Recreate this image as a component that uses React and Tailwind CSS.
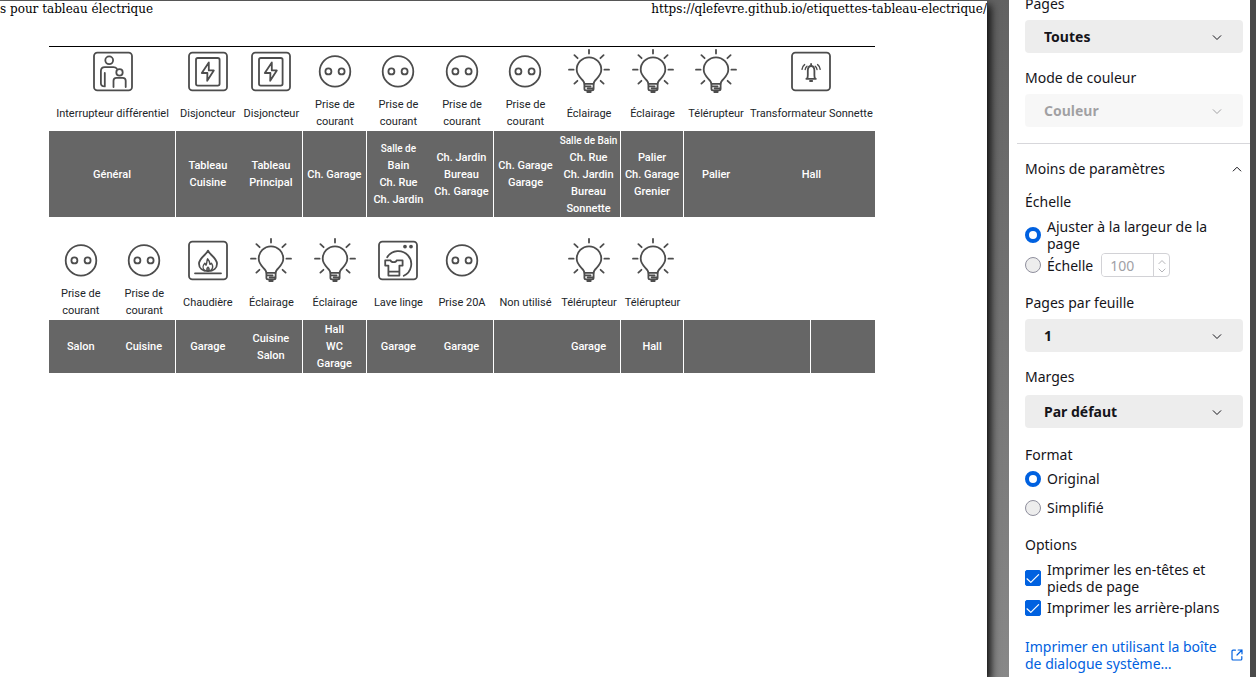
import React from "react";

const STROKE = {
  fill: "none",
  stroke: "#4d4d4d",
  strokeWidth: 1.8,
  strokeLinecap: "round",
  strokeLinejoin: "round",
};

function Glyph({ children }) {
  return (
    <svg viewBox="0 0 48 48" className="mx-auto block h-12 w-12" aria-hidden="true" {...STROKE}>
      {children}
    </svg>
  );
}

function Frame() {
  return <rect x="5" y="5.6" width="38" height="37.8" rx="3.4" />;
}

const ICONS = {
  people: (
    <Glyph>
      <Frame />
      <circle cx="20.2" cy="13.3" r="3.9" />
      <path d="M15.8 26v13.4c-2.4-.2-3.9-1.2-3.9-3V24c0-2.3 1.6-3.9 3.9-3.9h8.6c1.5 0 2.6.5 3.3 1.4" />
      <circle cx="30.5" cy="25.4" r="3.2" />
      <path d="M24.5 40v-6.2c0-1.8 1.2-3 3-3h6.2c1.8 0 3 1.2 3 3V40" />
    </Glyph>
  ),
  breaker: (
    <Glyph>
      <Frame />
      <rect x="12" y="11" width="23.6" height="27.6" rx="1.8" />
      <path d="M24.8 15.4 17.8 26h5.6l-.2 7.8 6.6-10.4h-5z" />
    </Glyph>
  ),
  socket: (
    <Glyph>
      <circle cx="24" cy="24.4" r="15.3" />
      <circle cx="17.4" cy="24.4" r="3" />
      <circle cx="30.6" cy="24.4" r="3" />
    </Glyph>
  ),
  bulb: (
    <Glyph>
      <path d="M24 2.8v3.8M9.4 8.2l3.2 3M38.6 8.2l-3.2 3M4 22.7h4.6M44 22.7h-4.6M9.4 36.6l3-2.8M38.6 36.6l-3-2.8" />
      <path d="M19.4 36.8c0-4.6-7.7-6.2-7.7-14.2a12.3 12.3 0 0 1 24.6 0c0 8-7.7 9.6-7.7 14.2" />
      <path d="M19.4 36.8h9.2v5c0 1-.6 1.600-1.600 1.600h-6c-1 0-1.600-.6-1.600-1.600zM20 39.300h5.600M22.600 41.300h5.600M22.300 45h3.400" />
    </Glyph>
  ),
  bell: (
    <Glyph>
      <Frame />
      <path d="M19.300 31.800h9.600M20 31.600c.8-1 .8-1.800.8-3.400v-4.400c0-2.600 1.300-4.800 3.300-4.800s3.300 2.200 3.300 4.800v4.400c0 1.600 0 2.400.8 3.400M24.100 17v1.600M23 34h2.200" />
      <path strokeWidth="1.400" d="M17.600 17.600c-1.600 1.200-2.400 2.800-2.600 4.800M20 19.200c-1 .8-1.600 1.900-1.800 3.300M30.600 17.600c1.600 1.200 2.400 2.800 2.600 4.800M28.200 19.200c1 .8 1.600 1.900 1.800 3.300" />
    </Glyph>
  ),
  flame: (
    <Glyph>
      <Frame />
      <path d="M11 37.300h26" />
      <path d="M24 14.600c1 3.800 9 7.200 9 13.200 0 4.200-3.400 7.200-9 7.200s-9-3-9-7.200c0-6 8-9.400 9-13.200z" />
      <path strokeWidth="1.400" d="M20.600 34.600c-2.200-2.200-1.800-5.400.2-7.400l1.200 2c1.200-2.200.6-4.400 1.600-6.400 1.400 1.200 2 3.400 2.400 5.600l1.400-1.200c1.800 2.600 1.600 5.400-.6 7.400M24 31.200c-1.400 1.200-1.400 2.400-.4 3.600M24 31.200c1.400 1.200 1.400 2.400.4 3.600" />
    </Glyph>
  ),
  washer: (
    <Glyph>
      <Frame />
      <circle cx="31" cy="10.600" r="1" fill="#4d4d4d" />
      <circle cx="37" cy="10.600" r="1" fill="#4d4d4d" />
      <path d="M13.200 21.200a13 13 0 1 1 16.600 18.600" />
      <path d="M11.200 24.400h5.400c.6 2.200 5.400 2.200 6 0h6v5.200h-3.200v10H14.400v-10h-3.200zM14.400 35.700h11" />
    </Glyph>
  ),
};

const ROWS = [
  {
    height: "h-[86px]",
    modules: [
      { icon: "people", label: ["Interrupteur différentiel"], span: 2, text: ["Général"], edge: true },
      { icon: "breaker", label: ["Disjoncteur"], text: ["Tableau", "Cuisine"] },
      { icon: "breaker", label: ["Disjoncteur"], text: ["Tableau", "Principal"], edge: true },
      { icon: "socket", label: ["Prise de", "courant"], text: ["Ch. Garage"], edge: true },
      { icon: "socket", label: ["Prise de", "courant"], small: true, text: ["Salle de", "Bain", "Ch. Rue", "Ch. Jardin"] },
      { icon: "socket", label: ["Prise de", "courant"], text: ["Ch. Jardin", "Bureau", "Ch. Garage"], edge: true },
      { icon: "socket", label: ["Prise de", "courant"], text: ["Ch. Garage", "Garage"] },
      { icon: "bulb", label: ["Éclairage"], small: true, text: ["Salle de Bain", "Ch. Rue", "Ch. Jardin", "Bureau", "Sonnette"], edge: true },
      { icon: "bulb", label: ["Éclairage"], text: ["Palier", "Ch. Garage", "Grenier"], edge: true },
      { icon: "bulb", label: ["Télérupteur"], text: ["Palier"] },
      { icon: "bell", label: ["Transformateur Sonnette"], span: 2, text: ["Hall"] },
    ],
  },
  {
    height: "h-[53px]",
    modules: [
      { icon: "socket", label: ["Prise de", "courant"], text: ["Salon"] },
      { icon: "socket", label: ["Prise de", "courant"], text: ["Cuisine"], edge: true },
      { icon: "flame", label: ["Chaudière"], text: ["Garage"] },
      { icon: "bulb", label: ["Éclairage"], text: ["Cuisine", "Salon"], edge: true },
      { icon: "bulb", label: ["Éclairage"], text: ["Hall", "WC", "Garage"], edge: true },
      { icon: "washer", label: ["Lave linge"], text: ["Garage"] },
      { icon: "socket", label: ["Prise 20A"], text: ["Garage"], edge: true },
      { label: ["Non utilisé"], text: [] },
      { icon: "bulb", label: ["Télérupteur"], text: ["Garage"], edge: true },
      { icon: "bulb", label: ["Télérupteur"], text: ["Hall"], edge: true },
      { label: [], span: 2, text: [], edge: true },
      { label: [], text: [] },
    ],
  },
];

function LabelStrip({ row }) {
  return (
    <table className="w-full table-fixed border-separate border-spacing-0 text-center font-['Roboto',sans-serif] leading-[17px]">
      <colgroup>
        {Array.from({ length: 13 }, (_, i) => (
          <col key={i} />
        ))}
      </colgroup>
      <thead>
        <tr>
          {row.modules.map((m, i) => (
            <th key={i} colSpan={m.span || 1} className="p-0 align-top text-[11px] font-normal text-[#212529]">
              {m.icon ? ICONS[m.icon] : <div className="h-12" />}
              <div className="flex h-9 flex-col justify-center whitespace-nowrap">
                {m.label.map((line) => (
                  <span key={line}>{line}</span>
                ))}
              </div>
            </th>
          ))}
        </tr>
      </thead>
      <tbody>
        <tr className={row.height}>
          {row.modules.map((m, i) => (
            <td
              key={i}
              colSpan={m.span || 1}
              className={`bg-[#666] p-0 align-middle text-[11px] font-medium text-white ${m.edge ? "border-r border-white" : ""}`}
            >
              <div className="flex flex-col items-center whitespace-nowrap">
                {m.text.map((line, n) => (
                  <span key={line} className={m.small && n === 0 ? "text-[10px]" : ""}>
                    {line}
                  </span>
                ))}
              </div>
            </td>
          ))}
        </tr>
      </tbody>
    </table>
  );
}

function Chevron({ up, className }) {
  return (
    <svg viewBox="0 0 10 10" className={className} fill="none" stroke="currentColor" strokeWidth="1" strokeLinecap="round" strokeLinejoin="round" aria-hidden="true">
      <path d={up ? "M1.200 7 5 3.200 8.800 7" : "M1.200 3.700 5 7.500l3.800-3.800"} />
    </svg>
  );
}

function SelectField({ id, label, options, disabled, className, gap = "mt-2" }) {
  return (
    <div className={className}>
      <label htmlFor={id} className="block">
        {label}
      </label>
      <div className={`grid items-center ${gap} ${disabled ? "opacity-40" : ""}`}>
        <select
          id={id}
          disabled={disabled}
          className="col-start-1 row-start-1 h-[33px] w-full appearance-none rounded bg-[#ededed] pr-9 pl-[19px] font-bold"
        >
          {options.map((o) => (
            <option key={o}>{o}</option>
          ))}
        </select>
        <Chevron className="pointer-events-none col-start-1 row-start-1 mr-[21px] h-2.5 w-2.5 justify-self-end" />
      </div>
    </div>
  );
}

function Radio({ id, name, label, defaultChecked, className = "" }) {
  return (
    <div className={`flex items-center gap-1.5 ${className}`}>
      <input
        type="radio"
        id={id}
        name={name}
        defaultChecked={defaultChecked}
        className="h-4 w-4 shrink-0 appearance-none rounded-full border border-[#8f8f9d] bg-[#ededed] checked:border-[4px] checked:border-[#0061e0] checked:bg-white"
      />
      <label htmlFor={id}>{label}</label>
    </div>
  );
}

function Checkbox({ id, label, className = "" }) {
  return (
    <div className={`flex items-center gap-1.5 ${className}`}>
      <span className="grid shrink-0">
        <input
          type="checkbox"
          id={id}
          defaultChecked
          className="peer col-start-1 row-start-1 h-4 w-4 appearance-none rounded-xs border border-[#8f8f9d] bg-[#ededed] checked:border-[#0061e0] checked:bg-[#0061e0]"
        />
        <svg viewBox="0 0 16 16" className="pointer-events-none invisible col-start-1 row-start-1 h-4 w-4 peer-checked:visible" fill="none" stroke="#fff" strokeWidth="1.2" strokeLinecap="round" strokeLinejoin="round" aria-hidden="true">
          <path d="M2 8.800 5.800 12.400 13.600 4.600" />
        </svg>
      </span>
      <label htmlFor={id}>{label}</label>
    </div>
  );
}

function Preview() {
  return (
    <main className="min-w-0 flex-1 overflow-hidden bg-linear-to-b from-[#626262] to-[#888] pt-px pr-[22px]">
      <article className="h-full bg-white shadow-[4px_4px_8px_#111]">
        <header className="flex justify-between font-['DejaVu_Serif',serif] text-[12px] leading-4 whitespace-nowrap text-black">
          <span>s pour tableau électrique</span>
          <span>https://qlefevre.github.io/etiquettes-tableau-electrique/</span>
        </header>
        <div className="mt-[29px] mr-28 ml-[49px] flex flex-col gap-[19px] border-t border-black">
          {ROWS.map((row, i) => (
            <LabelStrip key={i} row={row} />
          ))}
        </div>
      </article>
    </main>
  );
}

function Settings() {
  return (
    <aside className="w-[247px] shrink-0 overflow-hidden border-r-[6px] border-[#4a4a4a] bg-white font-['Noto_Sans',sans-serif] text-[14px] leading-[17px] text-[#15141a]">
      <form className="-mt-[5px] pl-4">
        <div className="pr-[7px]">
          <SelectField id="pages" label="Pages" options={["Toutes"]} />
          <SelectField id="color" label="Mode de couleur" options={["Couleur"]} disabled className="mt-4" />
        </div>
        <hr className="mt-4 -ml-2 border-[#d7d7db]" />
        <div className="pr-[7px]">
          <button type="button" className="mt-4 flex w-full items-center justify-between text-left">
            Moins de paramètres
            <Chevron up className="mr-px h-2.5 w-2.5" />
          </button>

          <fieldset className="mt-4">
            <legend>Échelle</legend>
            <Radio id="fit" name="scale" label="Ajuster à la largeur de la page" defaultChecked className="mt-2" />
            <div className="mt-px flex h-6 items-center gap-2">
              <Radio id="custom" name="scale" label="Échelle" />
              <div className="flex h-6 w-[69px] overflow-hidden rounded border border-[#d2d2d6] text-[#a1a1a6]">
                <input
                  type="text"
                  inputMode="numeric"
                  aria-label="Pourcentage"
                  defaultValue="100"
                  disabled
                  className="w-full min-w-0 flex-1 bg-white pl-2"
                />
                <div className="flex w-4 shrink-0 flex-col items-center justify-between border-l border-[#d2d2d6] py-1">
                  <button type="button" disabled aria-label="Augmenter">
                    <Chevron up className="h-2 w-2" />
                  </button>
                  <button type="button" disabled aria-label="Diminuer">
                    <Chevron className="h-2 w-2" />
                  </button>
                </div>
              </div>
            </div>
          </fieldset>

          <SelectField id="sheet" label="Pages par feuille" options={["1"]} className="mt-[17px]" />
          <SelectField id="margins" label="Marges" options={["Par défaut"]} className="mt-4" gap="mt-2.5" />

          <fieldset className="mt-[18px]">
            <legend>Format</legend>
            <Radio id="original" name="format" label="Original" defaultChecked className="mt-[7px]" />
            <Radio id="simple" name="format" label="Simplifié" className="mt-3" />
          </fieldset>

          <fieldset className="mt-5">
            <legend>Options</legend>
            <Checkbox id="headers" label="Imprimer les en-têtes et pieds de page" className="mt-2" />
            <Checkbox id="backgrounds" label="Imprimer les arrière-plans" className="mt-1" />
          </fieldset>

          <a href="#system" className="mt-[22px] flex items-center justify-between gap-2 text-[#0061e0]">
            <span>Imprimer en utilisant la boîte de dialogue système…</span>
            <svg viewBox="0 0 12 12" className="h-3 w-3 shrink-0" fill="none" stroke="currentColor" strokeWidth="1.200" strokeLinecap="round" strokeLinejoin="round" aria-hidden="true">
              <path d="M4.400 1.200H2a1 1 0 0 0-1 1V10a1 1 0 0 0 1 1h7.800a1 1 0 0 0 1-1V7.600M7.200 1h3.800v3.800M11 1 6 6" />
            </svg>
          </a>
        </div>
      </form>
    </aside>
  );
}

export default function App() {
  return (
    <div className="flex h-screen overflow-hidden">
      <Preview />
      <Settings />
    </div>
  );
}
